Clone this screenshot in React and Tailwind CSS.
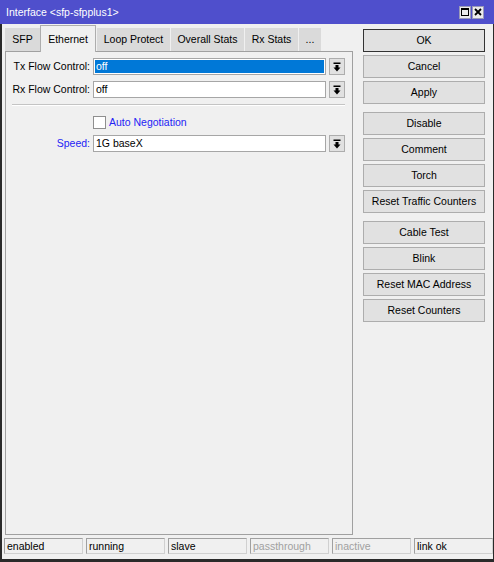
const TABS = [
  { label: "SFP", w: "w-[35px]" },
  { label: "Ethernet", w: "w-[56px]", active: true },
  { label: "Loop Protect", w: "w-[73px]" },
  { label: "Overall Stats", w: "w-[73px]" },
  { label: "Rx Stats", w: "w-[53px]" },
  { label: "...", w: "w-[22px]" },
];

const BUTTON_GROUPS = [
  ["OK", "Cancel", "Apply"],
  ["Disable", "Comment", "Torch", "Reset Traffic Counters"],
  ["Cable Test", "Blink", "Reset MAC Address", "Reset Counters"],
];

const STATUS = [
  { text: "enabled" },
  { text: "running" },
  { text: "slave" },
  { text: "passthrough", dim: true },
  { text: "inactive", dim: true },
  { text: "link ok" },
];

function DropIcon() {
  return (
    <svg width="14" height="15" viewBox="0 0 14 15" fill="#000">
      <rect x="3.5" y="3.5" width="7" height="1.5" />
      <path d="M5.5 6h3v2.5h2l-3.5 4-3.5-4h2z" />
    </svg>
  );
}

function DropButton() {
  return (
    <div className="ml-[3px] flex h-full w-[16px] items-center justify-center border border-[#adadad] bg-[#e1e1e1]">
      <DropIcon />
    </div>
  );
}

function Field({ label, value, selected, blue }) {
  return (
    <div className="flex h-[17px] items-center">
      <div className={`w-[84px] text-right leading-none ${blue ? "text-[#2323f5]" : "text-black"}`}>
        {label}
      </div>
      <div className="ml-[3px] h-full w-[233px] border border-[#a6a6a6] bg-white p-[1px]">
        {selected ? (
          <div className="flex h-full items-center bg-[#0078d7] pl-[1px] leading-none text-white">{value}</div>
        ) : (
          <div className="flex h-full items-center pl-[1px] leading-none text-black">{value}</div>
        )}
      </div>
      <DropButton />
    </div>
  );
}

export default function App() {
  return (
    <div className="flex h-[562px] w-[494px] flex-col bg-[#f0f0f0] font-['Liberation_Sans',Arial,sans-serif] text-[10.5px] text-black">
      {/* title bar */}
      <div className="flex h-[24px] shrink-0 items-center justify-between bg-[#4f4fcc] pl-[6px] pr-[10px]">
        <span className="leading-none text-white">Interface &lt;sfp-sfpplus1&gt;</span>
        <div className="flex gap-[1px]">
          <div className="flex h-[13px] w-[12px] items-center justify-center border border-[#9a9ab8] bg-[#ececec]">
            <svg width="8" height="8" viewBox="0 0 8 8" fill="none" stroke="#000">
              <rect x="0.5" y="0.5" width="7" height="7" />
              <line x1="0" y1="1.5" x2="8" y2="1.5" />
            </svg>
          </div>
          <div className="flex h-[13px] w-[12px] items-center justify-center border border-[#9a9ab8] bg-[#ececec]">
            <svg width="8" height="8" viewBox="0 0 8 8" stroke="#000" strokeWidth="1.8">
              <path d="M1 1l6 6M7 1l-6 6" />
            </svg>
          </div>
        </div>
      </div>

      <div className="flex flex-1 flex-col border-b-[3px] border-l-2 border-r border-[#2a2a2a]">
        <div className="flex">
          {/* left column: tabs + panel */}
          <div className="ml-[3px] flex flex-col">
            <div className="mt-[1px] flex h-[26px] items-end gap-[1px]">
              {TABS.map((tab) =>
                tab.active ? (
                  <div
                    key={tab.label}
                    className={`relative z-10 -mb-px -ml-px flex h-[27px] items-start justify-center border border-b-0 border-[#adadad] bg-[#f0f0f0] pt-[8px] leading-none ${tab.w}`}
                  >
                    {tab.label}
                  </div>
                ) : (
                  <div
                    key={tab.label}
                    className={`flex h-[23px] items-center justify-center bg-[#dadada] leading-none ${tab.w}`}
                  >
                    {tab.label}
                  </div>
                )
              )}
            </div>
            <div className="h-[484px] w-[348px] border border-[#a0a0a0]">
              <div className="mt-[6px]">
                <Field label="Tx Flow Control:" value="off" selected />
              </div>
              <div className="mt-[6px]">
                <Field label="Rx Flow Control:" value="off" />
              </div>
              <div className="ml-[6px] mt-[6px] w-[333px] border-t border-b border-t-[#c4c4c4] border-b-white" />
              <div className="ml-[87px] mt-[10px] flex h-[13px] items-center">
                <div className="h-[13px] w-[13px] border border-[#8f8f8f] bg-white" />
                <span className="ml-[3px] leading-none text-[#2323f5]">Auto Negotiation</span>
              </div>
              <div className="mt-[6px]">
                <Field label="Speed:" value="1G baseX" blue />
              </div>
            </div>
          </div>

          {/* right column: buttons */}
          <div className="ml-[10px] mt-[5px] flex flex-col gap-[8px]">
            {BUTTON_GROUPS.map((group, gi) => (
              <div key={gi} className="flex flex-col gap-[3px]">
                {group.map((label) => (
                  <button
                    key={label}
                    className={`flex h-[23px] w-[122px] items-center justify-center border bg-[#e1e1e1] leading-none ${
                      label === "OK" ? "border-[#333333]" : "border-[#adadad]"
                    }`}
                  >
                    {label}
                  </button>
                ))}
              </div>
            ))}
          </div>
        </div>

        {/* status bar */}
        <div className="ml-[2px] mt-[3px] flex gap-[3px]">
          {STATUS.map((s) => (
            <div
              key={s.text}
              className={`flex h-[16px] w-[79px] items-center border border-b-[#d0d0d0] border-l-[#a0a0a0] border-r-[#d0d0d0] border-t-[#a0a0a0] pl-[2px] leading-none ${
                s.dim ? "text-[#a0a0a0]" : "text-black"
              }`}
            >
              {s.text}
            </div>
          ))}
        </div>
      </div>
    </div>
  );
}
